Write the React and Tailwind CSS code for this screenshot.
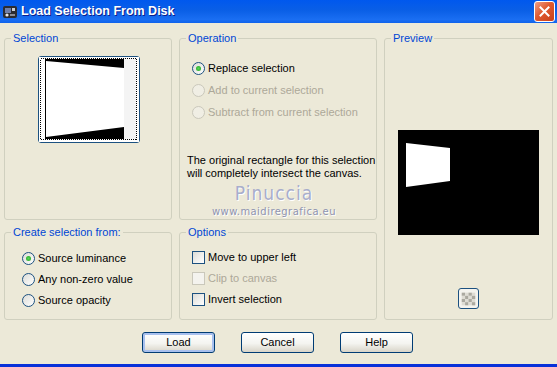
import React from 'react';

const font = "font-['Liberation_Sans',Arial,sans-serif]";

function Radio({ checked, disabled }) {
  return (
    <span
      className={`flex h-[13px] w-[13px] shrink-0 items-center justify-center rounded-full border ${
        disabled
          ? 'border-[#CAC8BB] bg-[#F0EEE4]'
          : 'border-[#1C5180] bg-[linear-gradient(135deg,#DCDCD7,#FFFFFF)]'
      }`}
    >
      {checked && <span className="h-[5px] w-[5px] rounded-full bg-[radial-gradient(circle,#55D855,#21A121)]" />}
    </span>
  );
}

function Checkbox({ disabled }) {
  return (
    <span
      className={`block h-[13px] w-[13px] shrink-0 border ${
        disabled
          ? 'border-[#CAC8BB] bg-[#F4F3EE]'
          : 'border-[#1C5180] bg-[linear-gradient(135deg,#DCDCD7,#FFFFFF)]'
      }`}
    />
  );
}

function Group({ title, children }) {
  return (
    <fieldset className="h-full min-w-0 rounded-[3px] border border-[#D0D0BF]">
      <legend className="ml-[6px] px-[2px] leading-[13px] text-[#0046D5]">{title}</legend>
      {children}
    </fieldset>
  );
}

function Option({ control, label, disabled, h = 'h-[22px]' }) {
  return (
    <div className={`flex ${h} items-center`}>
      {control}
      <span className={`ml-[3px] ${disabled ? 'text-[#ACA899]' : 'text-black'}`}>{label}</span>
    </div>
  );
}

function Button({ children, primary }) {
  return (
    <button
      type="button"
      className={`h-[21px] w-[73px] rounded-[3px] border border-[#003C74] bg-[linear-gradient(to_bottom,#FFFFFF,#F4F4F0_55%,#D8D4C8)] text-[11px] leading-none text-black ${
        primary ? 'shadow-[inset_0_0_0_2px_#A8C0EE]' : ''
      }`}
    >
      {children}
    </button>
  );
}

function Thumbnail() {
  return (
    <div className="h-[87px] w-[102px] rounded-[3px] border border-[#1C5180] bg-white">
      <svg width="100" height="85" viewBox="0 0 100 85" shapeRendering="crispEdges">
        <rect x="0" y="0" width="100" height="85" fill="#fff" />
        <rect x="85" y="2" width="12" height="80" fill="#F4F4F4" />
        <rect x="1.5" y="1.5" width="96" height="81" fill="none" stroke="#000" strokeDasharray="1 1" />
        <rect x="6" y="2" width="1" height="80" fill="#000" />
        <polygon points="7,2 85,2 85,11 7,4" fill="#000" shapeRendering="auto" />
        <polygon points="7,82 85,82 85,70 7,80" fill="#000" shapeRendering="auto" />
      </svg>
    </div>
  );
}

function PreviewCanvas() {
  return (
    <svg width="141" height="105" viewBox="0 0 141 105">
      <rect width="141" height="105" fill="#000" />
      <polygon points="8,13 52,18 52,51 8,57" fill="#fff" />
    </svg>
  );
}

function CheckerButton() {
  const squares = [];
  for (let r = 0; r < 4; r++) {
    for (let c = 0; c < 4; c++) {
      squares.push(
        <rect
          key={`${r}-${c}`}
          x={3 + c * 3.75}
          y={3 + r * 3.5}
          width="3.75"
          height="3.5"
          fill={(r + c) % 2 === 0 ? '#ABA9A0' : '#DEDCD4'}
        />,
      );
    }
  }
  return (
    <button
      type="button"
      className="flex h-[21px] w-[21px] items-center justify-center rounded-[3px] border border-[#1C5180] bg-[#F4F3EE]"
    >
      <svg width="21" height="20" viewBox="0 0 21 20">
        {squares}
      </svg>
    </button>
  );
}

function TitleIcon() {
  return (
    <svg width="16" height="16" viewBox="0 0 16 16">
      <rect x="1" y="2" width="14" height="12" rx="2" fill="#2B2B30" />
      <rect x="3" y="4" width="6" height="5" fill="#6F7EA8" />
      <rect x="10" y="4" width="3" height="3" fill="#C9CDD6" />
      <circle cx="5" cy="11" r="1.6" fill="#E8E8E8" />
      <rect x="8" y="10" width="5" height="2" fill="#8C8C94" />
    </svg>
  );
}

export default function App() {
  return (
    <div className={`${font} flex h-[367px] w-[557px] flex-col overflow-hidden bg-[#ECE9D8] text-[11px]`}>
      <div className="flex h-[23px] shrink-0 items-center bg-[linear-gradient(to_bottom,#0058EE,#0A5FE6_45%,#1A6EF2_85%,#0F63EC)] pl-[2px] pr-[2px]">
        <TitleIcon />
        <span className="ml-[3px] text-[12.5px] font-bold text-white [text-shadow:1px_1px_0_#0A1E8C]">
          Load Selection From Disk
        </span>
        <span className="ml-auto flex h-[21px] w-[21px] items-center justify-center rounded-[3px] border border-white bg-[linear-gradient(135deg,#F0A088,#E05A30_45%,#C8401A)]">
          <svg width="11" height="11" viewBox="0 0 11 11">
            <path d="M1.5 1.5 L9.5 9.5 M9.5 1.5 L1.5 9.5" stroke="#fff" strokeWidth="2" strokeLinecap="square" />
          </svg>
        </span>
      </div>

      <div className="grid grid-cols-[168px_198px_169px] grid-rows-[188px_94px] gap-x-[7px] gap-y-[6px] pl-[4px] pt-[9px]">
        <Group title="Selection">
          <div className="pl-[33px] pt-[11px]">
            <Thumbnail />
          </div>
        </Group>

        <Group title="Operation">
          <div className="flex flex-col pl-[12px] pt-[12px]">
            <Option control={<Radio checked />} label="Replace selection" />
            <Option control={<Radio disabled />} label="Add to current selection" disabled />
            <Option control={<Radio disabled />} label="Subtract from current selection" disabled />
          </div>
          <p className="mt-[31px] pl-[7px] leading-[13px] text-black">
            The original rectangle for this selection
            <br />
            will completely intersect the canvas.
          </p>
          <div className="flex flex-col items-center pr-[8px] pt-[3px] text-[#A8ADCB] [text-shadow:1px_1px_0_#FFFFFF]">
            <span className="font-['DejaVu_Sans_Condensed','DejaVu_Sans',sans-serif] text-[19px] leading-[20px] tracking-[1px]">
              Pinuccia
            </span>
            <span className="mt-[3px] font-['DejaVu_Sans_Condensed','DejaVu_Sans',sans-serif] text-[11px] leading-[11px] tracking-[0.5px] text-[#8E93B0]">
              www.maidiregrafica.eu
            </span>
          </div>
        </Group>

        <div className="row-span-2">
          <Group title="Preview">
            <div className="flex flex-col items-center pr-[1px] pt-[85px]">
              <PreviewCanvas />
              <div className="mt-[53px]">
                <CheckerButton />
              </div>
            </div>
          </Group>
        </div>

        <Group title="Create selection from:">
          <div className="flex flex-col pl-[17px] pt-[9px]">
            <Option control={<Radio checked />} label="Source luminance" h="h-[21px]" />
            <Option control={<Radio />} label="Any non-zero value" h="h-[21px]" />
            <Option control={<Radio />} label="Source opacity" h="h-[21px]" />
          </div>
        </Group>

        <Group title="Options">
          <div className="flex flex-col pl-[12px] pt-[8px]">
            <Option control={<Checkbox />} label="Move to upper left" h="h-[21px]" />
            <Option control={<Checkbox disabled />} label="Clip to canvas" disabled h="h-[21px]" />
            <Option control={<Checkbox />} label="Invert selection" h="h-[21px]" />
          </div>
        </Group>
      </div>

      <div className="mt-[12px] flex justify-center gap-[26px] pr-[2px]">
        <Button primary>Load</Button>
        <Button>Cancel</Button>
        <Button>Help</Button>
      </div>

      <div className="mt-auto h-[3px] shrink-0 bg-[#0831D9]" />
    </div>
  );
}
